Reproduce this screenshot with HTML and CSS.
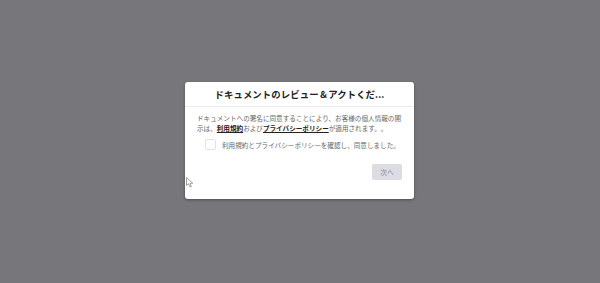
FILE: index.html
```html
<!DOCTYPE html>
<html lang="ja">
<head>
    <meta charset="UTF-8">
    <title>同意の確認</title>
    <link rel="stylesheet" href="styles.css">
</head>
<body>
    <div class="modal">
        <div class="modal-head">ドキュメントのレビュー＆アクトくだ...</div>
        <div class="modal-body">
            <p class="notice">ドキュメントへの署名に同意することにより、お客様の個人情報の開<br>示は、<a href="#">利用規約</a>および<a href="#">プライバシーポリシー</a>が適用されます。。</p>
            <label class="agree">
                <span class="box"></span>
                <span>利用規約とプライバシーポリシーを確認し、同意しました。</span>
            </label>
            <div class="actions">
                <button class="btn" disabled>次へ</button>
            </div>
        </div>
    </div>
    <svg class="cursor" width="8" height="11" viewBox="0 0 8 11">
        <path d="M0.5 0.5 L0.5 8.5 L2.5 6.8 L4 10 L5.4 9.4 L4 6.3 L6.8 6.3 Z" fill="#fff" stroke="#8a8a8e" stroke-width="0.8"/>
    </svg>
</body>
</html>
```

FILE: styles.css
```css
html, body { height: 100%; }
body { margin: 0; background: #77767a; font-family: "Noto Sans CJK JP", "Noto Sans", sans-serif; display: flex; align-items: center; justify-content: center; text-spacing-trim: space-all; }
.modal { width: 229px; background: #fff; border-radius: 3px; box-shadow: 0 1px 3px rgba(0,0,0,0.35); margin: 0 1px 2px 0; }
.modal-head { height: 24px; line-height: 25px; text-align: center; font-size: 9.4px; font-weight: bold; color: #222; border-bottom: 1px solid #ececee; letter-spacing: 0.1px; }
.modal-body { padding: 7px 12px 19px 12px; }
.notice { margin: 0; font-size: 6.6px; line-height: 9.8px; color: #666; }
.notice a { color: #222; font-weight: bold; text-decoration: underline; }
.agree { display: flex; align-items: center; gap: 6px; margin: 6px 0 0 8px; font-size: 6.6px; color: #666; }
.box { width: 9px; height: 9px; border: 1px solid #e2e2e6; border-radius: 2px; }
.actions { display: flex; justify-content: flex-end; margin-top: 14px; }
.btn { width: 30px; height: 16px; padding: 0; border: none; border-radius: 2px; background: #dcdce3; color: #8a8a93; font-family: inherit; font-size: 6.8px; }
.cursor { position: absolute; left: 186px; top: 177px; }
```
